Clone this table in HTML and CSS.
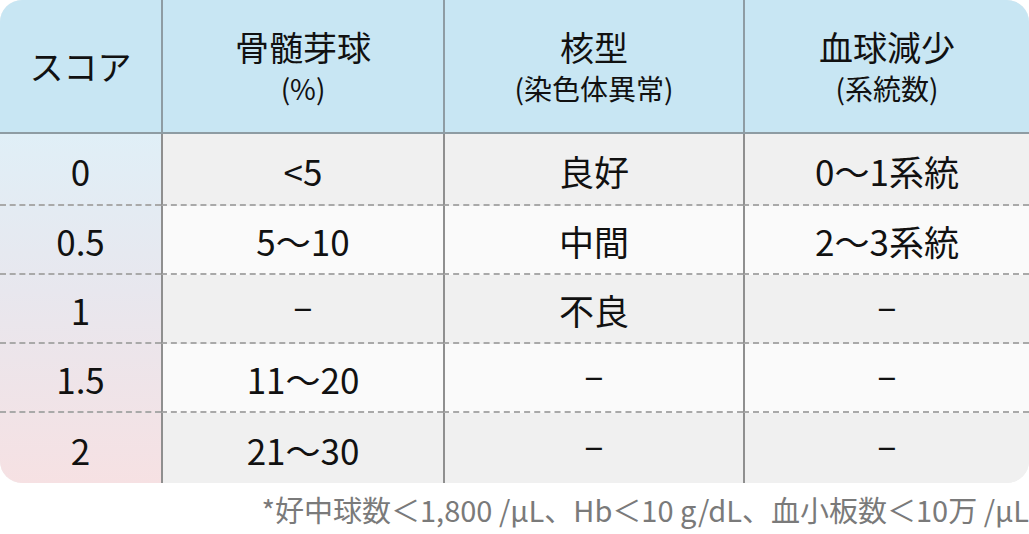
FILE: index.html
```html
<!DOCTYPE html>
<html lang="ja">
<head>
<meta charset="utf-8">
<link rel="stylesheet" href="styles.css">
</head>
<body>
<div class="wrap">
  <div class="table">
    <div class="score-bg"></div>
    <div class="hd c1"><span class="main">スコア</span></div>
    <div class="hd c2"><span class="main">骨髄芽球</span><span class="sub">(%)</span></div>
    <div class="hd c3"><span class="main">核型</span><span class="sub">(染色体異常)</span></div>
    <div class="hd c4"><span class="main">血球減少</span><span class="sub">(系統数)</span></div>

    <div class="cell c1 r1">0</div>
    <div class="cell c2 r1 odd">&lt;5</div>
    <div class="cell c3 r1 odd">良好</div>
    <div class="cell c4 r1 odd">0〜1系統</div>

    <div class="cell c1 r2">0.5</div>
    <div class="cell c2 r2 even">5〜10</div>
    <div class="cell c3 r2 even">中間</div>
    <div class="cell c4 r2 even">2〜3系統</div>

    <div class="cell c1 r3">1</div>
    <div class="cell c2 r3 odd"><span class="dash">–</span></div>
    <div class="cell c3 r3 odd">不良</div>
    <div class="cell c4 r3 odd"><span class="dash">–</span></div>

    <div class="cell c1 r4">1.5</div>
    <div class="cell c2 r4 even">11〜20</div>
    <div class="cell c3 r4 even"><span class="dash">–</span></div>
    <div class="cell c4 r4 even"><span class="dash">–</span></div>

    <div class="cell c1 r5 last">2</div>
    <div class="cell c2 r5 odd last">21〜30</div>
    <div class="cell c3 r5 odd last"><span class="dash">–</span></div>
    <div class="cell c4 r5 odd last"><span class="dash">–</span></div>
  </div>
  <p class="note">*好中球数＜1,800 /μL、Hb＜10 g/dL、血小板数＜10万 /μL</p>
</div>
</body>
</html>
```
FILE: styles.css
```css
html, body {
  margin: 0;
  padding: 0;
  background: #ffffff;
}
body {
  font-family: "Noto Sans CJK JP", "Noto Sans", sans-serif;
  color: #111;
}
.wrap {
  width: 1029px;
}
.table {
  position: relative;
  display: grid;
  grid-template-columns: 161px 282px 300px 286px;
  grid-template-rows: 134px 72px 69px 69px 69px 70px;
  border-radius: 22px;
  overflow: hidden;
  background: #f0f0f0;
}
.score-bg {
  grid-column: 1;
  grid-row: 2 / 7;
  background: linear-gradient(to bottom, #e0eff7 0%, #e8e7ee 45%, #f6e1e3 100%);
}
.hd {
  grid-row: 1;
  background: #c8e6f3;
  display: flex;
  flex-direction: column;
  align-items: center;
  justify-content: center;
  border-bottom: 2px solid #8e9ca3;
  border-left: 2px solid #8e9ca3;
  box-sizing: border-box;
  padding-top: 0;
}
.hd.c1 { border-left: none; }
.hd .main {
  font-size: 34px;
  line-height: 38px;
}
.hd .sub {
  font-size: 28px;
  line-height: 32px;
  margin-top: 6px;
}
.cell {
  display: flex;
  align-items: center;
  justify-content: center;
  font-size: 35px;
  box-sizing: border-box;
  border-bottom: 2px dashed #a9a9a9;
  padding-top: 2px;
}
.cell.last { border-bottom: none; }
.c1 { grid-column: 1; }
.c2 { grid-column: 2; }
.c3 { grid-column: 3; }
.c4 { grid-column: 4; }
.cell.c2, .cell.c3, .cell.c4 { border-left: 2px solid #8f8f8f; }
.r1 { grid-row: 2; }
.r2 { grid-row: 3; }
.r3 { grid-row: 4; }
.r4 { grid-row: 5; }
.r5 { grid-row: 6; }
.cell.c1 { background: transparent; }
.odd { background: #f0f0f0; }
.even { background: #fafafa; }
.dash {
  display: inline-block;
  font-size: 36px;
  margin-bottom: 12px;
}
.note {
  margin: 6px 0 0 0;
  text-align: right;
  font-size: 29px;
  line-height: 40px;
  color: #7a7a7a;
  letter-spacing: 0;
  white-space: nowrap;
}
```
